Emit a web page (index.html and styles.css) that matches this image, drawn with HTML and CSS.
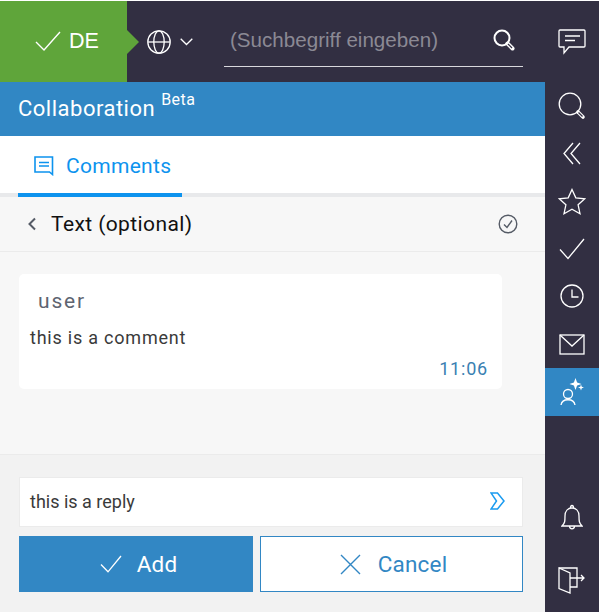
FILE: index.html
```html
<!DOCTYPE html>
<html lang="en">
<head>
<meta charset="UTF-8">
<title>Collaboration</title>
<link rel="stylesheet" href="styles.css">
</head>
<body>

<!-- top bar -->
<header class="topbar">
  <div class="lang-state">
    <svg class="ico-check" width="26" height="20" viewBox="0 0 26 20"><path d="M1 11l8 8L25 1"/></svg>
    <span>DE</span>
  </div>
  <div class="lang-pick">
    <svg class="ico" width="24" height="24" viewBox="0 0 24 24"><circle cx="12" cy="12" r="11.200"/><ellipse cx="12" cy="12" rx="5.200" ry="11.200"/><path d="M1 12h22"/></svg>
    <svg class="ico" width="13" height="8" viewBox="0 0 13 8"><path d="M.7.7l5.800 5.800L12.300.7"/></svg>
  </div>
  <div class="search">
    <span class="search-hint">(Suchbegriff eingeben)</span>
    <svg class="ico" width="22" height="22" viewBox="0 0 22 22"><circle cx="9" cy="9" r="7.500" stroke-width="2"/><path d="M14.500 14.500l5 5" stroke-width="4" stroke-linecap="round"/><path class="handle" d="M15 15l4 4"/></svg>
  </div>
  <div class="top-msg">
    <svg class="ico" width="28" height="26" viewBox="0 0 28 26"><path d="M2 1h24q1 0 1 1v15q0 1-1 1H11l-5 6v-6H2q-1 0-1-1V2q0-1 1-1z"/><path d="M7 7h15M7 11.500h10"/></svg>
  </div>
</header>

<div class="layout">
  <main class="panel">
    <div class="panel-head">Collaboration <sup>Beta</sup></div>

    <nav class="tabs">
      <div class="tab">
        <svg class="ico-blue" width="20" height="20" viewBox="0 0 20 20"><path d="M1 1h17.500v17.500l-3-2.500H1z"/><path d="M5 6.500h10M5 10h10"/></svg>
        Comments
      </div>
    </nav>

    <div class="title-row">
      <svg class="ico-grey" width="10" height="14" viewBox="0 0 10 14"><path d="M8 1.500L2.500 7 8 12.500" stroke-width="2"/></svg>
      <span class="title-text">Text (optional)</span>
      <svg class="ico-grey title-done" width="20" height="20" viewBox="0 0 20 20"><circle cx="10" cy="10" r="8.800"/><path d="M6 10.500l3 3 5-7"/></svg>
    </div>

    <section class="thread">
      <article class="comment">
        <div class="comment-user">user</div>
        <p class="comment-text">this is a comment</p>
        <div class="comment-time">11:06</div>
      </article>
    </section>

    <footer class="reply">
      <div class="reply-input">
        <span>this is a reply</span>
        <svg class="ico-send" width="15" height="18" viewBox="0 0 15 18"><path d="M1 1h6.500L14 9l-6.500 8H1l5.500-8z"/></svg>
      </div>
      <div class="reply-btns">
        <button type="button" class="btn btn-add">
          <svg class="ico" width="22" height="18" viewBox="0 0 22 18"><path d="M1 9.500L8 16.800 21 1"/></svg>
          Add
        </button>
        <button type="button" class="btn btn-cancel">
          <svg class="ico-x" width="21" height="21" viewBox="0 0 21 21"><path d="M1 1l19 19M20 1L1 20"/></svg>
          Cancel
        </button>
      </div>
    </footer>
  </main>

  <!-- right rail -->
  <aside class="rail">
    <div class="rail-item">
      <svg class="ico" width="28" height="28" viewBox="0 0 28 28"><circle cx="12" cy="12" r="10.800"/><path d="M20 20l5 5" stroke-width="3.600" stroke-linecap="round"/><path class="handle" d="M20.500 20.500l4 4"/></svg>
    </div>
    <div class="rail-item">
      <svg class="ico" width="18" height="23" viewBox="0 0 18 23"><path d="M10 1L1 11.500 10 22M17 1L8 11.500 17 22"/></svg>
    </div>
    <div class="rail-item">
      <svg class="ico" width="28" height="27" viewBox="0 0 28 27"><path d="M14 1.500l3.800 8.300 9 1-6.700 6 1.900 8.900-8-4.500-8 4.500 1.900-8.900-6.700-6 9-1z"/></svg>
    </div>
    <div class="rail-item">
      <svg class="ico" width="26" height="22" viewBox="0 0 26 22"><path d="M1 11.500L9 20.500 25 1"/></svg>
    </div>
    <div class="rail-item">
      <svg class="ico" width="24" height="24" viewBox="0 0 24 24"><circle cx="12" cy="12" r="11"/><path d="M12 5.500V13h6.500"/></svg>
    </div>
    <div class="rail-item">
      <svg class="ico" width="26" height="21" viewBox="0 0 26 21"><rect x="1" y="1" width="24" height="19"/><path d="M1 1l12 11L25 1"/></svg>
    </div>
    <div class="rail-item rail-active">
      <svg class="ico" width="24" height="28" viewBox="0 0 24 28"><circle cx="8" cy="16" r="4.500"/><path d="M1 27c1-7 13-7 14 0"/><path class="spark" d="M15.500 0l1.600 4.400L21.500 6l-4.400 1.600L15.500 12l-1.600-4.400L9.500 6l4.400-1.600zM21 6.500l.8 2.200 2.200.8-2.200.8-.8 2.200-.8-2.200-2.200-.8 2.200-.8z"/></svg>
    </div>
    <div class="rail-item rail-bell">
      <svg class="ico" width="22" height="26" viewBox="0 0 22 26"><path d="M1 22c3-3 3-5 3-10 0-5 3-8 7-8s7 3 7 8c0 5 0 7 3 10z"/><path d="M9.500 4q0-2.500 1.500-2.500T12.500 4M8.500 22q0 2.800 2.500 2.800T13.500 22"/></svg>
    </div>
    <div class="rail-item rail-last">
      <svg class="ico" width="28" height="27" viewBox="0 0 28 27"><path d="M1 1h18v19H12"/><path d="M1 1l11 5v20L1 21.500z"/><path d="M12 11h14M23 8l3 3-3 3"/></svg>
    </div>
  </aside>
</div>

</body>
</html>
```

FILE: styles.css
```css
html,body{margin:0;height:100%;}
body{width:599px;height:612px;overflow:hidden;font-family:Roboto,sans-serif;background:#fff;}
svg{display:block;flex:none;fill:none;}
.ico{stroke:#fff;stroke-width:1.300;}
.ico-check{stroke:#fff;stroke-width:1.400;}
.ico-blue{stroke:#0d93ee;stroke-width:1.600;}
.ico-grey{stroke:#555b66;stroke-width:1.400;}
.ico-send{stroke:#1a9bf0;stroke-width:1.500;}
.ico-x{stroke:#3287c4;stroke-width:1.400;}
.handle{stroke:#322f42;stroke-width:1.200;}
.spark{fill:#fff;stroke:none;}

/* top bar */
.topbar{display:flex;height:81px;margin-top:1px;background:#322f42;}
.lang-state{position:relative;display:flex;align-items:center;gap:8px;width:127px;box-sizing:border-box;padding:0 0 1px 35px;background:#5fa53a;color:#fff;font:21.500px "Liberation Sans",sans-serif;}
.lang-state::after{content:"";position:absolute;left:127px;top:29px;border-left:12px solid #5fa53a;border-top:12px solid transparent;border-bottom:12px solid transparent;}
.lang-pick{display:flex;align-items:center;gap:9px;width:97px;box-sizing:border-box;padding-left:20px;}
.search{display:flex;align-items:center;justify-content:space-between;width:299px;height:66px;box-sizing:border-box;padding:13px 8px 0 6px;border-bottom:1px solid #d8d8dc;}
.search-hint{color:#8b8994;font:20.600px "Liberation Sans",sans-serif;}
.top-msg{display:flex;justify-content:center;align-items:center;flex:1;padding-left:22px;}

.layout{display:flex;height:530px;}

/* panel */
.panel{display:flex;flex-direction:column;width:545px;background:#f7f7f7;}
.panel-head{height:54px;box-sizing:border-box;padding:14px 0 0 18px;background:#3187c4;color:#fff;font-size:22px;line-height:26px;letter-spacing:.5px;}
.panel-head sup{font-size:16px;line-height:0;vertical-align:11px;}
.tabs{height:61px;box-sizing:border-box;padding-left:18px;background:#fff;border-bottom:4px solid #e8e9eb;}
.tab{display:flex;align-items:center;gap:12px;width:164px;height:61px;box-sizing:border-box;padding:2px 0 0 16px;border-bottom:4px solid #0d93ee;color:#0d93ee;font-size:21px;letter-spacing:.3px;}
.title-row{display:flex;align-items:center;height:55px;box-sizing:border-box;padding:0 18px 0 27px;border-bottom:1px solid #ebebeb;}
.title-text{flex:1;margin-left:14px;color:#111;font-size:21px;letter-spacing:.4px;}
.title-done{margin-right:9px;}

.thread{height:203px;box-sizing:border-box;padding:22px 43px 0 19px;border-bottom:1px solid #ebebeb;}
.comment{height:115px;box-sizing:border-box;padding:15px 14px 0 11px;background:#fff;border-radius:5px;}
.comment-user{margin-left:8px;color:#5e6470;font-size:21px;line-height:24px;letter-spacing:1.800px;}
.comment-text{margin:13px 0 0;color:#3a3a3a;font-size:18px;line-height:24px;letter-spacing:.78px;}
.comment-time{margin-top:8px;text-align:right;color:#3a7fb2;font-size:18px;line-height:22px;letter-spacing:.8px;}

.reply{flex:1;box-sizing:border-box;padding:22px 22px 0 19px;background:#f2f2f2;}
.reply-input{display:flex;align-items:center;justify-content:space-between;height:50px;box-sizing:border-box;padding:0 17px 2px 10px;background:#fff;border:1px solid #ebebeb;color:#3a3a3a;font-size:18px;}
.reply-btns{display:flex;gap:7px;margin-top:9px;}
.btn{display:flex;align-items:center;justify-content:center;height:56px;box-sizing:border-box;font:22.500px Roboto,sans-serif;letter-spacing:.2px;}
.btn-add{width:234px;gap:15px;padding:0 0 0 5px;border:0;background:#3287c4;color:#fff;}
.btn-cancel{width:263px;gap:17px;padding:0 0 0 4px;border:1px solid #3287c4;background:#fff;color:#3287c4;}

/* right rail */
.rail{display:flex;flex-direction:column;flex:1;background:#322f42;}
.rail-item{display:flex;justify-content:center;align-items:center;height:47.670px;}
.rail-active{height:48px;background:#3187c4;}
.rail-bell{margin-top:77px;}
.rail-last{margin-top:16px;}
```
